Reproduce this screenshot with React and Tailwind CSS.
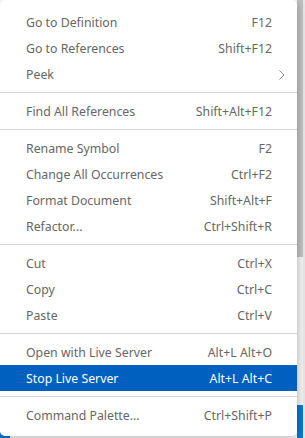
import React from 'react';

const groups = [
    [
        { label: 'Go to Definition', key: 'F12' },
        { label: 'Go to References', key: 'Shift+F12' },
        { label: 'Peek', sub: true },
    ],
    [{ label: 'Find All References', key: 'Shift+Alt+F12' }],
    [
        { label: 'Rename Symbol', key: 'F2' },
        { label: 'Change All Occurrences', key: 'Ctrl+F2' },
        { label: 'Format Document', key: 'Shift+Alt+F' },
        { label: 'Refactor...', key: 'Ctrl+Shift+R' },
    ],
    [
        { label: 'Cut', key: 'Ctrl+X' },
        { label: 'Copy', key: 'Ctrl+C' },
        { label: 'Paste', key: 'Ctrl+V' },
    ],
    [
        { label: 'Open with Live Server', key: 'Alt+L Alt+O' },
        { label: 'Stop Live Server', key: 'Alt+L Alt+C', active: true },
    ],
    [{ label: 'Command Palette...', key: 'Ctrl+Shift+P' }],
];

const Item = ({ label, shortcut, sub, active }) => (
    <div className={`h-[26px] flex items-center justify-between pl-[26px] pr-[25px] pt-[2px] ${active ? 'bg-[#0060c0] text-white' : 'text-[#666666]'}`}>
        <span>{label}</span>
        {sub ? (
            <svg width="8" height="12" viewBox="0 0 8 12" className="mr-[-14px]">
                <path d="M1.5 1.5 L6 6 L1.5 10.5" fill="none" stroke="#8a8a8a" strokeWidth="1" />
            </svg>
        ) : (
            <span>{shortcut}</span>
        )}
    </div>
);

const App = () => {
    return (
        <div className="w-[305px] h-[438px] bg-white relative overflow-hidden" style={{ fontFamily: '"Noto Sans", "Open Sans", sans-serif' }}>
            {/* editor background behind the menu */}
            <div className="absolute right-0 top-0 w-[8px] h-full flex">
                <div className="w-[6px] h-full flex flex-col">
                    <div className="h-[257px] bg-[#c1c1c1]" />
                    <div className="h-[148px] bg-[#f3f3f3]" />
                    <div className="flex-1 bg-[#0a78d4]" />
                </div>
                <div className="w-[2px] h-full bg-[#e6e6e6]" />
            </div>
            <div className="absolute left-0 bottom-0 w-[10px] h-[6px] bg-[#0a78d4]" />

            <div className="absolute left-0 top-0 w-[297px] h-[436px] bg-white rounded-[5px] shadow-[0_2px_8px_rgba(0,0,0,0.3)] py-[9px] text-[12.3px] leading-none overflow-hidden">
                {groups.map((g, gi) => (
                    <div key={gi}>
                        {gi > 0 && (
                            <div className="h-[11px] flex items-center">
                                <div className="w-full h-px bg-[#d4d4d4]" />
                            </div>
                        )}
                        {g.map((it) => (
                            <Item key={it.label} label={it.label} shortcut={it.key} sub={it.sub} active={it.active} />
                        ))}
                    </div>
                ))}
            </div>
        </div>
    );
};

export default App;
